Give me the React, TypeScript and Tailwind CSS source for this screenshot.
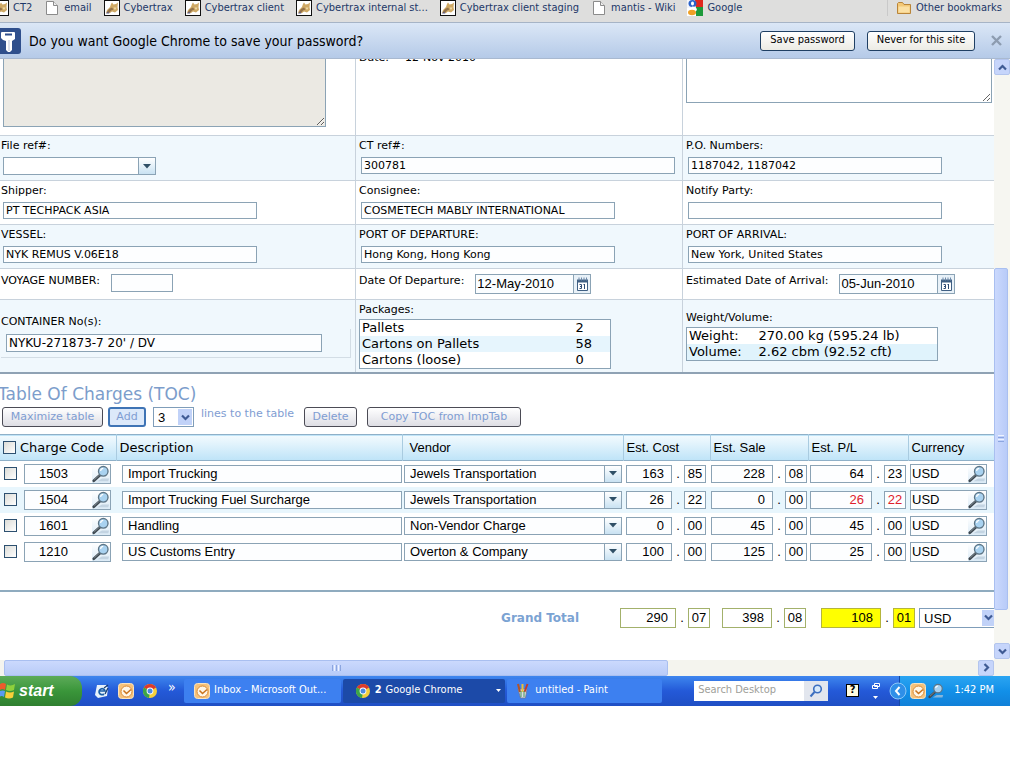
import React from 'react';

const tahoma = "font-['DejaVu_Sans_Condensed','DejaVu_Sans',sans-serif]";
const arial = "font-['Liberation_Sans',Arial,sans-serif]";

interface Charge {
  code: string;
  description: string;
  vendor: string;
  cost: [string, string];
  sale: [string, string];
  pl: [string, string];
  negative?: boolean;
}

const charges: Charge[] = [
  { code: '1503', description: 'Import Trucking', vendor: 'Jewels Transportation', cost: ['163', '85'], sale: ['228', '08'], pl: ['64', '23'] },
  { code: '1504', description: 'Import Trucking Fuel Surcharge', vendor: 'Jewels Transportation', cost: ['26', '22'], sale: ['0', '00'], pl: ['26', '22'], negative: true },
  { code: '1601', description: 'Handling', vendor: 'Non-Vendor Charge', cost: ['0', '00'], sale: ['45', '00'], pl: ['45', '00'] },
  { code: '1210', description: 'US Customs Entry', vendor: 'Overton & Company', cost: ['100', '00'], sale: ['125', '00'], pl: ['25', '00'] },
];

/* ---------- icons ---------- */

const FoxIcon = () => (
  <svg width="16" height="16" viewBox="0 0 16 16" className="shrink-0">
    <rect x="0.5" y="0.5" width="15" height="15" fill="#fff" stroke="#111" />
    <path d="M2 13 3 10 6 7 7 4 8 2.500 9.500 4.500 12 4 14 2.500 13.500 7 14 10 11 12.500 8 11.500 6 13z" fill="#cfa965" />
    <path d="M3 12 5 9 8 7.500 9.500 9.500 7 10.500 5.500 12.500z" fill="#94734a" />
    <path d="M2 13.500 4 11.500 5.500 13.500z" fill="#5a5880" />
    <path d="M9.500 7.500h3L11 10z" fill="#f0dcaa" />
  </svg>
);

const PageIcon = () => (
  <svg width="16" height="16" viewBox="0 0 16 16" className="shrink-0">
    <path d="M2.500 1.500h7l4 4v9h-11z" fill="#fff" stroke="#8b8b8b" />
    <path d="M9.500 1.500v4h4" fill="#eee" stroke="#8b8b8b" />
  </svg>
);

const GoogleIcon = () => (
  <svg width="16" height="16" viewBox="0 0 16 16" className="shrink-0">
    <rect width="8" height="8" fill="#f4f6fb" />
    <path d="M8 0h8v7H9z" fill="#e0281e" />
    <path d="M9 7h7v9H9z" fill="#1d9a3a" />
    <path d="M0 8h9v8H0z" fill="#fff" />
    <ellipse cx="5.500" cy="3.500" rx="4" ry="3.500" fill="#2a62c9" />
    <ellipse cx="5.500" cy="3.500" rx="1.500" ry="2" fill="#fff" />
    <ellipse cx="5" cy="12.500" rx="4" ry="2.800" fill="#f0a024" />
    <path d="M5 7.500c2 0 4 1 4 3" stroke="#fff" strokeWidth="2" fill="none" />
  </svg>
);

const FolderIcon = () => (
  <svg width="16" height="16" viewBox="0 0 16 16" className="shrink-0">
    <path d="M1.500 13.500v-10l1-1h4l1.500 2h6.500v9z" fill="#f3c877" stroke="#b9853a" />
    <path d="M2.500 12.500v-6h11v6z" fill="#fbe0a4" />
  </svg>
);

const KeyIcon = () => (
  <svg width="21" height="26" viewBox="0 0 21 26" className="shrink-0">
    <path d="M0 0h18q3 0 3 3v20q0 3-3 3H0z" fill="#2f4f8c" />
    <path d="M1 5q0-1 1-1h12q1 0 1 1v6l-3 2v9l-2 2H8l-2-2v-9l-3-1-2-2z" fill="#fff" />
    <rect x="5" y="5.500" width="7" height="2" fill="#2f4f8c" />
    <path d="M9 12v11" stroke="#b9c3d6" />
  </svg>
);

const Magnifier = ({ size = 19 }: { size?: number }) => (
  <svg width={size} height={size} viewBox="0 0 20 20" className="shrink-0">
    <path d="M6 18h12l1-3h-8z" fill="#b7c9d8" opacity="0.7" />
    <path d="M2 17.500 9 11" stroke="#3e4850" strokeWidth="3" strokeLinecap="round" />
    <path d="M2.500 16.500 8.500 11" stroke="#98a4ac" strokeWidth="0.800" />
    <circle cx="12.500" cy="7" r="5.300" fill="#a9d2f0" stroke="#5d7586" strokeWidth="1.500" />
    <path d="M9.500 6.500a3.300 3.300 0 0 1 3-2.800" stroke="#fff" strokeWidth="1.400" fill="none" />
  </svg>
);

const CalendarIcon = () => (
  <svg width="13" height="15" viewBox="0 0 13 15" className="shrink-0">
    <path d="M1.500 4.500h10v9h-10z" fill="#fff" stroke="#3f5f83" />
    <path d="M1 2.500h11v3H1z" fill="#3f5f83" />
    <path d="M3 .5v3M5.500 .5v3M8 .5v3M10.500 .5v3" stroke="#6d88a8" />
    <path d="M3.500 7.500h2v4h-2M4 9.500h1.500M8.500 7v5M7.500 7.500h1" stroke="#2e4c74" fill="none" />
  </svg>
);

const Triangle = () => (
  <svg width="8" height="5" viewBox="0 0 8 5">
    <path d="M0 0h8L4 4.500z" fill="#2f4f66" />
  </svg>
);

const Chevron = ({ className = '' }: { className?: string }) => (
  <svg width="9" height="9" viewBox="0 0 9 9" className={className}>
    <path d="M1 2.500l3.500 3.500L8 2.500" fill="none" stroke="#3f5b94" strokeWidth="2.200" />
  </svg>
);

const OutlookIcon = () => (
  <svg width="16" height="16" viewBox="0 0 16 16" className="shrink-0">
    <rect x="0.500" y="0.500" width="15" height="15" rx="3" fill="#f6c27a" stroke="#fbe3bd" />
    <circle cx="8.500" cy="8.500" r="5.500" fill="#fff6e6" stroke="#d98a35" />
    <path d="M5.500 7.500l3 3 4.500-4" fill="none" stroke="#c9731d" strokeWidth="1.500" />
  </svg>
);

const ChromeIcon = () => (
  <svg width="16" height="16" viewBox="0 0 16 16" className="shrink-0">
    <circle cx="8" cy="8" r="7" fill="#f4cf3c" />
    <path d="M8 8 1.900 4.500A7 7 0 0 1 14.100 4.500z" fill="#dc3a2c" />
    <path d="M8 8 1.900 4.500A7 7 0 0 0 7 15z" fill="#3ba648" />
    <circle cx="8" cy="8" r="3.400" fill="#fff" />
    <circle cx="8" cy="8" r="2.500" fill="#4c8ae0" />
  </svg>
);

const IeIcon = () => (
  <svg width="16" height="16" viewBox="0 0 16 16" className="shrink-0">
    <path d="M3 2h9l2 3-1 8-9 2-3-3z" fill="#e8f2fb" />
    <path d="M5 8h6a3 3 0 1 0-1 3" fill="none" stroke="#1c5fa8" strokeWidth="1.700" />
    <path d="M10 5l4-3M11 11l3-6" stroke="#1c3f70" strokeWidth="1.300" />
  </svg>
);

const PaintIcon = () => (
  <svg width="16" height="16" viewBox="0 0 16 16" className="shrink-0">
    <path d="M3 6h9l-1.500 9h-5z" fill="#d9dce4" stroke="#6d7690" strokeWidth="0.800" />
    <path d="M5 9 3 1" stroke="#b3542a" strokeWidth="2" />
    <path d="M7.500 9V1" stroke="#e8c03a" strokeWidth="2" />
    <path d="M9.500 9l3-8" stroke="#c23b2c" strokeWidth="2" />
    <path d="M6 8v6M9 8v6" stroke="#4a9a58" />
  </svg>
);

const WindowsFlag = () => (
  <svg width="15" height="17" viewBox="0 0 15 17" className="shrink-0">
    <path d="M0 2q3-2 6 0L5 8q-3-2-5 0z" fill="#ee5a2c" />
    <path d="M7 2.500q4 2 8-.5l-1 6q-4 2-8 0z" fill="#8fd03c" />
    <path d="M0 9q3-1 5 0l-1 6q-2-1.500-4-.5z" fill="#5a9af0" />
    <path d="M6 9.500q4 2 8 0l-1 6q-4 2-8 0z" fill="#f8cf3a" />
  </svg>
);

/* ---------- form parts ---------- */

const inputBase = 'border border-[#8ba3b5] bg-[#fdfeff] text-black outline-none';

const Cell = ({ shaded, children, className = 'pb-[5px] pl-[3px]' }: { shaded?: boolean; children: React.ReactNode; className?: string }) => (
  <div className={`min-w-0 border-t border-r border-[#c8d2dc] pt-[3px] ${shaded ? 'bg-[#f0f8fd]' : 'bg-white'} ${className}`}>
    {children}
  </div>
);

const firstCol = 'pb-[5px] pl-px';
const lastCol = 'border-r-0 pb-[5px] pl-[3px]';

const Field = ({ id, label, value, wide }: { id: string; label: string; value: string; wide?: boolean }) => (
  <>
    <label htmlFor={id} className="block leading-[14px]">{label}</label>
    <input
      id={id}
      defaultValue={value}
      className={`${inputBase} mt-1 ml-0.5 block h-[17px] px-0.5 ${wide ? 'w-[314px]' : 'w-[254px]'}`}
    />
  </>
);

const DateField = ({ id, label, value }: { id: string; label: string; value: string }) => (
  <div className="flex items-start gap-[11px] pt-0.5">
    <label htmlFor={id} className="leading-[14px] whitespace-nowrap">{label}</label>
    <div className="flex h-5 w-[116px] border border-[#8ba3b5]">
      <input id={id} defaultValue={value} className={`${arial} w-0 flex-1 bg-[#fafdff] px-px text-[13px] outline-none`} />
      <button type="button" aria-label="Pick a date" className="flex w-[17px] items-center justify-center border-l border-[#8ba3b5] bg-[#e8f1f8]">
        <CalendarIcon />
      </button>
    </div>
  </div>
);

const DropButton = ({ label }: { label: string }) => (
  <button type="button" aria-label={label} className="flex w-[17px] items-center justify-center border-l border-[#8ba3b5] bg-gradient-to-b from-white to-[#c9e2f2]">
    <Triangle />
  </button>
);

const ToolButton = ({ children, active, className }: { children: React.ReactNode; active?: boolean; className: string }) => (
  <button
    type="button"
    className={`h-5 rounded-[3px] text-[11px] leading-4 whitespace-nowrap text-[#7f9dd2] ${className} ${
      active ? 'border-2 border-[#3f74b5] bg-[#dce9fa]' : 'border border-[#4b4b55] bg-gradient-to-b from-white to-[#dedee4]'
    }`}
  >
    {children}
  </button>
);

interface MoneyProps {
  name: string;
  value: [string, string];
  width: string;
  box?: string;
}

const Money = ({ name, value, width, box = 'h-[18px] border-[#8ba3b5] bg-[#fdfeff]' }: MoneyProps) => (
  <div className={`${arial} flex items-center text-[13px]`}>
    <input aria-label={name} defaultValue={value[0]} className={`border pr-[7px] text-right outline-none ${width} ${box}`} />
    <span className="w-3 text-center text-black">.</span>
    <input aria-label={`${name} cents`} defaultValue={value[1]} className={`w-[22px] border px-0 text-center outline-none ${box}`} />
  </div>
);

const Lookup = ({ label, value, className, inputClass }: { label: string; value: string; className: string; inputClass: string }) => (
  <div className={`${arial} flex h-5 border border-[#8ba3b5] bg-[#fdfeff] text-[13px] ${className}`}>
    <input aria-label={label} defaultValue={value} className={`w-0 flex-1 outline-none ${inputClass}`} />
    <button type="button" aria-label={`Look up ${label}`} className="flex items-center bg-gradient-to-b from-white to-[#dcebf6]">
      <Magnifier size={18} />
    </button>
  </div>
);

const Check = ({ label }: { label: string }) => (
  <input
    type="checkbox"
    aria-label={label}
    className="h-[13px] w-[13px] shrink-0 appearance-none border border-[#2d5070] bg-gradient-to-br from-[#dcdcd7] to-white"
  />
);

const arrowBox = 'flex h-4 w-4 shrink-0 items-center justify-center rounded-[2px] border border-[#b3c5ee] bg-[#c6d5fb]';

const VerticalScroll = () => (
  <div className="flex w-4 shrink-0 flex-col bg-[#f6f6f1]">
    <button type="button" aria-label="Scroll up" className={arrowBox}><Chevron className="rotate-180" /></button>
    <div className="flex-[194]" />
    <div className="flex w-3.5 flex-[341] flex-col items-center justify-center gap-px rounded-[2px] border border-[#a9bff0] bg-gradient-to-r from-[#cbd9fd] to-[#b8cbf8]">
      <span className="h-px w-1.5 bg-[#eef3ff]" />
      <span className="h-px w-1.5 bg-[#8ca6e0]" />
      <span className="h-px w-1.5 bg-[#eef3ff]" />
      <span className="h-px w-1.5 bg-[#8ca6e0]" />
    </div>
    <div className="flex-[34]" />
    <button type="button" aria-label="Scroll down" className={arrowBox}><Chevron /></button>
  </div>
);

const Bookmark = ({ icon, children }: { icon: React.ReactNode; children: React.ReactNode }) => (
  <a href="#" className="flex shrink-0 items-center gap-1 leading-4 whitespace-nowrap">
    {icon}
    {children}
  </a>
);

const headCell = 'border-r border-[#a9cbe0] pl-[3px] text-left font-normal';

const App: React.FC = () => {
  return (
    <div className="mr-3.5 overflow-hidden bg-white font-['DejaVu_Sans',sans-serif] text-[11px] text-black">
      <nav className={`${tahoma} flex items-start border-b border-[#a6b4c6] bg-[#dededd] pb-1.5 text-[#1c3768]`}>
        <div className="-ml-[7px] flex gap-3">
          <Bookmark icon={<FoxIcon />}>CT2</Bookmark>
          <Bookmark icon={<PageIcon />}>email</Bookmark>
          <Bookmark icon={<FoxIcon />}>Cybertrax</Bookmark>
          <Bookmark icon={<FoxIcon />}>Cybertrax client</Bookmark>
          <Bookmark icon={<FoxIcon />}>Cybertrax internal st...</Bookmark>
          <Bookmark icon={<FoxIcon />}>Cybertrax client staging</Bookmark>
          <Bookmark icon={<PageIcon />}>mantis - Wiki</Bookmark>
          <Bookmark icon={<GoogleIcon />}>Google</Bookmark>
        </div>
        <div className="ml-auto border-l border-[#c9c9c9] pr-2 pl-2">
          <Bookmark icon={<FolderIcon />}>Other bookmarks</Bookmark>
        </div>
      </nav>

      <div className={`${tahoma} flex h-9 items-center border-b border-[#a9b9d0] bg-gradient-to-b from-[#dbe7f6] to-[#b5cae8]`}>
        <KeyIcon />
        <p className="ml-2 flex-1 text-sm">Do you want Google Chrome to save your password?</p>
        <button type="button" className="h-5 w-[95px] rounded-[3px] border border-[#1f3f63] bg-gradient-to-b from-white to-[#ecebe4] whitespace-nowrap">
          Save password
        </button>
        <button type="button" className="ml-3 h-5 w-[108px] rounded-[3px] border border-[#1f3f63] bg-gradient-to-b from-white to-[#ecebe4] whitespace-nowrap">
          Never for this site
        </button>
        <button type="button" aria-label="Close" className="mr-2 ml-4">
          <svg width="11" height="11" viewBox="0 0 11 11">
            <path d="M1 1l9 9M10 1l-9 9" stroke="#8d9cb0" strokeWidth="2.400" />
          </svg>
        </button>
      </div>

      <div className="flex">
        <main className="min-w-0 flex-1">
          <section className="grid grid-cols-[356fr_327fr_311fr] overflow-hidden border-b-2 border-[#8fa2b4]">
            <div className="h-[76px] border-r border-[#c8d2dc] pl-[3px]">
              <textarea aria-label="Address" className="block h-[68px] w-[323px] border border-t-0 border-[#8ba3b5] bg-[#ebe9e3]" />
            </div>
            <div className="h-[76px] overflow-hidden border-r border-[#c8d2dc] pl-[3px]">
              <p className="-mt-2 flex gap-4 leading-[14px]"><span>Date:</span><span>12-Nov-2010</span></p>
            </div>
            <div className="h-[76px] pl-[3px]">
              <textarea aria-label="Remarks" className="block h-11 w-[306px] border border-t-0 border-[#8ba3b5] bg-white" />
            </div>

            <Cell shaded className={firstCol}>
              <label htmlFor="fileRef" className="block leading-[14px]">File ref#:</label>
              <div className="mt-1 ml-0.5 flex h-[18px] w-[153px] border border-[#8ba3b5] bg-white">
                <input id="fileRef" className="w-0 flex-1 px-0.5 outline-none" />
                <DropButton label="Show file refs" />
              </div>
            </Cell>
            <Cell shaded><Field id="ctRef" label="CT ref#:" value="300781" wide /></Cell>
            <Cell shaded className={lastCol}><Field id="po" label="P.O. Numbers:" value="1187042, 1187042" /></Cell>

            <Cell className={firstCol}><Field id="shipper" label="Shipper:" value="PT TECHPACK ASIA" /></Cell>
            <Cell><Field id="consignee" label="Consignee:" value="COSMETECH MABLY INTERNATIONAL" /></Cell>
            <Cell className={lastCol}><Field id="notify" label="Notify Party:" value="" /></Cell>

            <Cell shaded className={firstCol}><Field id="vessel" label="VESSEL:" value="NYK REMUS V.06E18" /></Cell>
            <Cell shaded><Field id="departure" label="PORT OF DEPARTURE:" value="Hong Kong, Hong Kong" /></Cell>
            <Cell shaded className={lastCol}><Field id="arrival" label="PORT OF ARRIVAL:" value="New York, United States" /></Cell>

            <Cell className={firstCol}>
              <div className="flex items-start gap-[11px] pt-0.5">
                <label htmlFor="voyage" className="leading-[14px]">VOYAGE NUMBER:</label>
                <input id="voyage" className={`${inputBase} h-[18px] w-[62px] px-0.5`} />
              </div>
            </Cell>
            <Cell><DateField id="depDate" label="Date Of Departure:" value="12-May-2010" /></Cell>
            <Cell className={lastCol}><DateField id="arrDate" label="Estimated Date of Arrival:" value="05-Jun-2010" /></Cell>

            <Cell shaded className="flex flex-col justify-center pb-[3px] pl-px">
              <label htmlFor="container" className="leading-[14px]">CONTAINER No(s):</label>
              <div className="mr-1 border-r border-b border-[#d3dde5] py-[5px] pl-[5px]">
                <input id="container" defaultValue="NYKU-271873-7 20' / DV" className={`${inputBase} block h-[18px] w-[316px] px-0.5 text-xs`} />
              </div>
            </Cell>
            <Cell shaded className="flex flex-col justify-center pb-[3px] pl-[3px]">
              <p className="leading-[14px]">Packages:</p>
              <table className="mt-0.5 w-[252px] border border-[#8ba3b5] bg-white text-[13px] leading-4">
                <tbody>
                  <tr><td className="pl-0.5">Pallets</td><td className="w-[35px]">2</td></tr>
                  <tr className="bg-[#e6f5fd]"><td className="pl-0.5">Cartons on Pallets</td><td>58</td></tr>
                  <tr><td className="pl-0.5">Cartons (loose)</td><td>0</td></tr>
                </tbody>
              </table>
            </Cell>
            <Cell shaded className="flex flex-col justify-center border-r-0 pb-[3px] pl-[3px]">
              <p className="leading-[14px]">Weight/Volume:</p>
              <table className="mt-0.5 w-[252px] border border-[#8ba3b5] bg-white text-[13px] leading-4">
                <tbody>
                  <tr><td className="w-[72px] pl-0.5">Weight:</td><td>270.00 kg (595.24 lb)</td></tr>
                  <tr className="bg-[#e0f3fc]"><td className="pl-0.5">Volume:</td><td>2.62 cbm (92.52 cft)</td></tr>
                </tbody>
              </table>
            </Cell>
          </section>

          <section>
            <h2 className="-ml-0.5 pt-2 text-[17px] leading-[25px] text-[#7c9dcb]">Table Of Charges (TOC)</h2>
            <div className="flex items-start pl-0.5 text-[#7f9dd2]">
              <ToolButton className="w-[101px]">Maximize table</ToolButton>
              <ToolButton className="ml-[5px] w-[38px]" active>Add</ToolButton>
              <div className="relative ml-[7px] h-5 w-[41px]">
                <select id="lines" defaultValue="3" className={`${arial} h-5 w-full appearance-none border border-[#7f9db9] bg-white pl-1 text-[13px] text-black`}>
                  <option>1</option>
                  <option>2</option>
                  <option>3</option>
                </select>
                <span className="pointer-events-none absolute top-0.5 right-0.5 flex h-4 w-3.5 items-center justify-center bg-[#c1d2f8]">
                  <Chevron />
                </span>
              </div>
              <label htmlFor="lines" className="mr-2.5 ml-[7px] leading-[14px]">lines to the table</label>
              <ToolButton className="w-[53px]">Delete</ToolButton>
              <ToolButton className="ml-2.5 w-[154px]">Copy TOC from ImpTab</ToolButton>
            </div>

            <div className="mt-[7px] border-b-2 border-[#8fabbf] pb-[25px]">
              <table className="w-full table-fixed border-collapse">
                <colgroup>
                  <col className="w-[116px]" />
                  <col />
                  <col className="w-[221px]" />
                  <col className="w-[87px]" />
                  <col className="w-[98px]" />
                  <col className="w-[100px]" />
                  <col className="w-[86px]" />
                </colgroup>
                <thead>
                  <tr className="h-[26px] border-t border-b border-[#8fb0c8] bg-gradient-to-b from-[#f2fafe] to-[#bfe4f8] text-[13px]">
                    <th className={headCell}>
                      <div className="flex items-center gap-1"><Check label="Select all" />Charge Code</div>
                    </th>
                    <th className={headCell}>Description</th>
                    <th className={`${headCell} ${arial}`}><span className="pl-1">Vendor</span></th>
                    <th className={`${headCell} ${arial}`}>Est. Cost</th>
                    <th className={`${headCell} ${arial}`}>Est. Sale</th>
                    <th className={`${headCell} ${arial}`}>Est. P/L</th>
                    <th className={`${arial} pl-[3px] text-left font-normal`}>Currency</th>
                  </tr>
                </thead>
                <tbody>
                  {charges.map((c) => (
                    <tr key={c.code} className={`h-[26px] ${c.negative ? 'bg-[#e8f6fd]' : ''}`}>
                      <td className="pl-1">
                        <div className="flex items-center gap-[7px]">
                          <Check label={`Select ${c.code}`} />
                          <Lookup label="charge code" value={c.code} className="w-[87px]" inputClass="pl-[14px]" />
                        </div>
                      </td>
                      <td className="pl-1.5">
                        <input aria-label="Description" defaultValue={c.description} className={`${inputBase} ${arial} block h-[18px] w-full px-[5px] text-[13px]`} />
                      </td>
                      <td className="pr-px pl-0.5">
                        <div className="flex h-[18px] border border-[#8ba3b5] bg-[#fdfeff]">
                          <input aria-label="Vendor" defaultValue={c.vendor} className={`${arial} w-0 flex-1 px-[5px] text-[13px] outline-none`} />
                          <DropButton label="Show vendors" />
                        </div>
                      </td>
                      <td className="pl-[3px]"><Money name="Est. Cost" value={c.cost} width="w-[46px]" /></td>
                      <td className="pl-px"><Money name="Est. Sale" value={c.sale} width="w-[62px]" /></td>
                      <td className={`pl-0.5 ${c.negative ? 'text-[#e0202c]' : ''}`}><Money name="Est. P/L" value={c.pl} width="w-[62px]" /></td>
                      <td className="pl-0.5"><Lookup label="currency" value="USD" className="w-[77px]" inputClass="pl-px" /></td>
                    </tr>
                  ))}
                </tbody>
              </table>
            </div>

            <div className="flex items-center justify-end pt-4 pb-8">
              <strong className="mr-[41px] text-xs text-[#7ba3d3]">Grand Total</strong>
              <Money name="Total cost" value={['290', '07']} width="w-14" box="h-5 border-[#a3b16b] bg-white" />
              <div className="ml-3"><Money name="Total sale" value={['398', '08']} width="w-[50px]" box="h-5 border-[#a3b16b] bg-white" /></div>
              <div className="ml-[15px]"><Money name="Total P/L" value={['108', '01']} width="w-[60px]" box="h-5 border-[#b5b53c] bg-[#ffff00]" /></div>
              <div className="relative ml-1 h-5 w-[75px]">
                <select aria-label="Total currency" className={`${arial} h-5 w-full appearance-none border border-r-0 border-[#7f9db9] bg-white pl-1 text-[13px]`}>
                  <option>USD</option>
                </select>
                <span className="pointer-events-none absolute top-0.5 right-0 flex h-4 w-3 items-center justify-center bg-[#c1d2f8]">
                  <Chevron />
                </span>
              </div>
            </div>
          </section>
        </main>
        <VerticalScroll />
      </div>

      <div className="flex h-4 bg-[#f4f4ee] pr-4">
        <div className="ml-1 flex flex-[663] items-center justify-center gap-px rounded-[2px] border border-[#a9bff0] bg-gradient-to-b from-[#cbd9fd] to-[#b8cbf8]">
          <span className="h-1.5 w-px bg-[#8ca6e0]" />
          <span className="h-1.5 w-px bg-[#eef3ff]" />
          <span className="h-1.5 w-px bg-[#8ca6e0]" />
          <span className="h-1.5 w-px bg-[#eef3ff]" />
          <span className="h-1.5 w-px bg-[#8ca6e0]" />
        </div>
        <div className="flex-[310]" />
        <button type="button" aria-label="Scroll right" className={arrowBox}><Chevron className="-rotate-90" /></button>
      </div>

      <footer className={`${tahoma} flex h-[30px] items-center bg-gradient-to-b from-[#3f86ee] via-[#2459d8] to-[#1f4fc4] text-white`}>
        <button type="button" className={`${arial} flex h-full w-[82px] shrink-0 items-center gap-1 rounded-r-xl bg-gradient-to-b from-[#5cab59] via-[#3a963a] to-[#2f7f30] text-base font-bold italic`}>
          <WindowsFlag />
          start
        </button>
        <div className="ml-3 flex items-center gap-2">
          <IeIcon />
          <OutlookIcon />
          <ChromeIcon />
        </div>
        <span className="mr-1.5 ml-2.5 w-2.5 pb-2 text-sm leading-none">»</span>
        <div className="flex max-w-[478px] flex-1 gap-0.5">
          <button type="button" className="flex h-6 flex-1 items-center gap-1 rounded-[2px] bg-[#3d80f0] pl-2.5 whitespace-nowrap"><OutlookIcon />Inbox - Microsoft Out...</button>
          <button type="button" className="flex h-6 flex-1 items-center gap-1 rounded-[2px] bg-[#1c4aa8] pr-1 pl-3 whitespace-nowrap">
            <ChromeIcon /><b>2</b>Google Chrome
            <svg width="5" height="3" viewBox="0 0 5 3" className="ml-auto"><path d="M0 0h5L2.500 3z" fill="#fff" /></svg>
          </button>
          <button type="button" className="flex h-6 flex-1 items-center gap-1 rounded-[2px] bg-[#3d80f0] pl-2 whitespace-nowrap"><PaintIcon />untitled - Paint</button>
        </div>
        <div className="ml-auto flex h-5 shrink-0">
          <input aria-label="Search Desktop" placeholder="Search Desktop" className="w-[110px] bg-white px-1 text-black outline-none placeholder:text-[#a0a09a]" />
          <button type="button" aria-label="Search" className="flex w-6 items-center justify-center bg-[#e2e6ee]">
            <svg width="14" height="14" viewBox="0 0 14 14">
              <circle cx="8.500" cy="5" r="3.800" fill="#d8eafb" stroke="#3c6fc0" strokeWidth="1.600" />
              <path d="M5.500 8 1.500 12.500" stroke="#3c6fc0" strokeWidth="2" />
            </svg>
          </button>
        </div>
        <span className="ml-[18px] flex h-[13px] w-[13px] shrink-0 items-center justify-center border border-black bg-[#fffbe0] text-[11px] font-bold text-black">?</span>
        <svg width="10" height="18" viewBox="0 0 10 18" className="ml-3 shrink-0">
          <path d="M3.500 1.500h5v3h-5zM1.500 3.500h5v3h-5z" fill="#2459d8" stroke="#fff" />
          <path d="M2 14h5l-2.500 3z" fill="#fff" />
        </svg>
        <svg width="18" height="18" viewBox="0 0 18 18" className="z-10 -mr-2 ml-2 shrink-0">
          <circle cx="9" cy="9" r="8" fill="#2f8fe8" stroke="#8cc8f8" />
          <path d="M10.500 5 7 9l3.500 4" fill="none" stroke="#fff" strokeWidth="2" />
        </svg>
        <div className="flex h-full shrink-0 items-center gap-0.5 border-l border-[#1248a8] bg-gradient-to-b from-[#2aa5f2] via-[#1290e8] to-[#1180d8] pr-4 pl-2.5">
          <OutlookIcon />
          <Magnifier size={16} />
          <span className="ml-2 whitespace-nowrap">1:42 PM</span>
        </div>
      </footer>
    </div>
  );
};

export default App;
